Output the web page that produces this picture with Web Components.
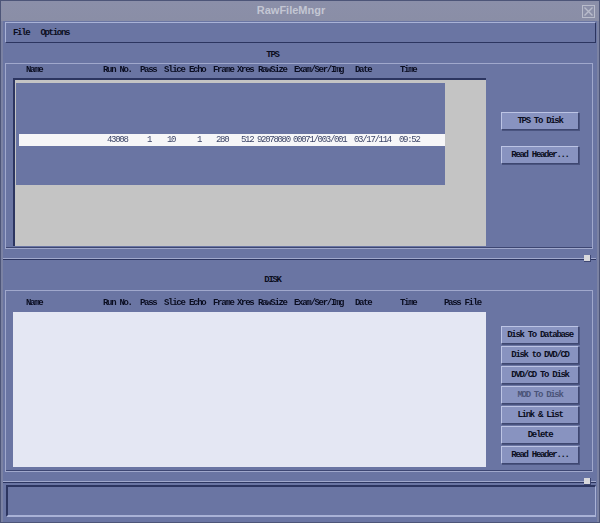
<!DOCTYPE html>
<html>
<head>
<meta charset="utf-8">
<title>RawFileMngr</title>
<style>
  html, body { margin: 0; padding: 0; background: #6a75a3; }
</style>
</head>
<body>
<raw-window>
  <raw-menubar><span>File</span><span>Options</span></raw-menubar>

  <raw-pane label="TPS" gap="34" label-height="20" label-top="7" header-height="14" list-height="168" bottom="2">
    <raw-row slot="header" columns="header" style="padding-top:1px">
      <span>Name</span><span>Run No.</span><span>Pass</span><span>Slice</span><span>Echo</span><span>Frame</span><span>Xres</span><span>RawSize</span><span>Exam/Ser/Img</span><span>Date</span><span>Time</span>
    </raw-row>
    <raw-tps-list slot="list">
      <raw-row columns="data" style="padding-top:1px">
        <span></span><span>43008</span><span>1</span><span>10</span><span>1</span><span>280</span><span>512</span><span>92078080</span><span>00071/003/001</span><span>03/17/114</span><span>09:52</span>
      </raw-row>
    </raw-tps-list>
    <raw-button slot="actions">TPS To Disk</raw-button>
    <raw-button slot="actions" style="margin-top:16px">Read Header...</raw-button>
  </raw-pane>

  <raw-sash></raw-sash>

  <raw-pane label="DISK" gap="14" label-height="30" label-top="15" header-height="21" list-height="155" bottom="4">
    <raw-row slot="header" columns="header" style="padding-top:7px">
      <span>Name</span><span>Run No.</span><span>Pass</span><span>Slice</span><span>Echo</span><span>Frame</span><span>Xres</span><span>RawSize</span><span>Exam/Ser/Img</span><span>Date</span><span>Time</span><span>Pass File</span>
    </raw-row>
    <raw-disk-list slot="list"></raw-disk-list>
    <raw-button slot="actions">Disk To Database</raw-button>
    <raw-button slot="actions" style="margin-top:2px">Disk to DVD/CD</raw-button>
    <raw-button slot="actions" style="margin-top:2px">DVD/CD To Disk</raw-button>
    <raw-button slot="actions" style="margin-top:2px" disabled>MOD To Disk</raw-button>
    <raw-button slot="actions" style="margin-top:2px">Link &amp; List</raw-button>
    <raw-button slot="actions" style="margin-top:2px">Delete</raw-button>
    <raw-button slot="actions" style="margin-top:2px">Read Header...</raw-button>
  </raw-pane>

  <raw-sash></raw-sash>
  <raw-status></raw-status>
</raw-window>

<script>
// condensed look of the X11 bitmap font: mono squeezed to about 4px per char
const UI_FONT = `"Liberation Mono", monospace`;
const UI_SPACING = "-1.3px";

class RawElement extends HTMLElement {
  constructor() {
    super();
    this.attachShadow({ mode: "open" });
  }
  connectedCallback() {
    this.shadowRoot.innerHTML = this.render();
  }
}

class RawWindow extends RawElement {
  render() {
    return /* html */ `
    <style>
      :host {
        display: block;
        box-sizing: border-box;
        width: 600px;
        height: 523px;
        overflow: hidden;
        background: #6a75a3;
        border: 1px solid #4d5578;
        font-family: ${UI_FONT};
      }
      .title {
        display: flex;
        box-sizing: border-box;
        align-items: center;
        justify-content: center;
        position: relative;
        height: 20px;
        padding: 0 18px 2px 0;
        background: linear-gradient(#8b8fa9, #8a8ea6);
        color: #c3c6d3;
        font: bold 11px "Liberation Sans", sans-serif;
      }
      .title svg { position: absolute; right: 4px; top: 4px; }
      .body {
        box-sizing: border-box;
        height: 501px;
        padding: 1px 3px 0 4px;
        box-shadow: inset 2px 0 0 #7b82a3, inset -2px 0 0 #7b82a3;
      }
    </style>
    <div class="title">RawFileMngr
      <svg width="13" height="13" viewBox="0 0 13 13" fill="none" stroke="#b9bccb">
        <rect x=".5" y=".5" width="12" height="12"/>
        <path d="M2.5 2.5l8 8M10.5 2.5l-8 8" stroke-width="1.4"/>
      </svg>
    </div>
    <div class="body"><slot></slot></div>`;
  }
}

class RawMenubar extends RawElement {
  render() {
    return /* html */ `
    <style>
      :host {
        display: flex;
        box-sizing: border-box;
        height: 21px;
        align-items: center;
        gap: 11px;
        padding: 1px 0 0 7px;
        background: #6a75a3;
        border: 1px solid;
        border-color: #a9b2d6 #2c3560 #2c3560 #a9b2d6;
        font: bold 9px ${UI_FONT};
        letter-spacing: ${UI_SPACING};
        color: #0a0d20;
      }
    </style>
    <slot></slot>`;
  }
}

class RawPane extends RawElement {
  render() {
    const gap = this.getAttribute("gap");
    const labelHeight = this.getAttribute("label-height");
    const labelTop = this.getAttribute("label-top");
    const headerHeight = this.getAttribute("header-height");
    const listHeight = this.getAttribute("list-height");
    return /* html */ `
    <style>
      :host { display: block; font: bold 9px ${UI_FONT}; letter-spacing: ${UI_SPACING}; color: #0a0d20; }
      .label {
        box-sizing: border-box;
        height: ${labelHeight}px;
        padding-right: 56px;
        padding-top: ${labelTop}px;
        text-align: center;
        line-height: 10px;
      }
      .frame {
        box-sizing: border-box;
        width: 588px;
        padding: 0 0 ${this.getAttribute("bottom")}px 7px;
        border: 1px solid #a0a8cc;
        box-shadow: inset 0 -1px 0 #3d4672;
        display: grid;
        grid-template-columns: 473px 1fr;
        grid-template-rows: ${headerHeight}px ${listHeight}px;
      }
      .header { grid-column: 1 / 3; margin-left: -7px; }
      .actions {
        display: flex;
        flex-direction: column;
        box-sizing: border-box;
        padding: ${gap}px 0 0 15px;
      }
    </style>
    <div class="label">${this.getAttribute("label")}</div>
    <div class="frame">
      <div class="header"><slot name="header"></slot></div>
      <slot name="list"></slot>
      <div class="actions"><slot name="actions"></slot></div>
    </div>`;
  }
}

const COLUMNS = {
  header: { start: 20, widths: "77px 37px 24px 25px 24px 24px 21px 36px 61px 45px 44px auto" },
  data: { start: 0, widths: "88px 40px 20px 30px 19px 25px 16px 36px 61px 45px auto" },
};

class RawRow extends RawElement {
  render() {
    const { start, widths } = COLUMNS[this.getAttribute("columns")];
    return /* html */ `
    <style>
      :host {
        display: grid;
        box-sizing: border-box;
        height: 100%;
        padding-left: ${start}px;
        grid-template-columns: ${widths};
        align-items: start;
        white-space: nowrap;
        will-change: transform;
      }
      ::slotted(span) { display: block; }
    </style>
    <slot></slot>`;
  }
}

class RawTpsList extends RawElement {
  render() {
    return /* html */ `
    <style>
      :host {
        display: block;
        box-sizing: border-box;
        height: 168px;
        background: #c4c4c4;
        border-top: 2px solid #2c3560;
        border-left: 2px solid #2c3560;
        padding: 3px 41px 61px 1px;
      }
      .viewport {
        box-sizing: border-box;
        height: 102px;
        background: #6a75a3;
        padding: 51px 0 39px 3px;
      }
      .selected {
        height: 12px;
        background: #f6f6f8;
        color: #3c4568;
        font: normal 9px ${UI_FONT};
        letter-spacing: ${UI_SPACING};
      }
    </style>
    <div class="viewport"><div class="selected"><slot></slot></div></div>`;
  }
}

class RawDiskList extends RawElement {
  render() {
    return `<style>:host { display: block; height: 155px; background: #e4e7f3; }</style>`;
  }
}

class RawButton extends RawElement {
  render() {
    const color = this.hasAttribute("disabled") ? "#4a5378" : "#0a0d20";
    return /* html */ `
    <style>
      :host {
        display: flex;
        box-sizing: border-box;
        width: 78px;
        height: 18px;
        align-items: center;
        justify-content: center;
        background: #8893c0;
        border: 1px solid;
        border-color: #bcc4e4 #3e4770 #3e4770 #bcc4e4;
        box-shadow: 1px 1px 0 #4a5480;
        color: ${color};
        font: bold 9px ${UI_FONT};
        letter-spacing: ${UI_SPACING};
        white-space: nowrap;
      }
    </style>
    <slot></slot>`;
  }
}

class RawSash extends RawElement {
  render() {
    return /* html */ `
    <style>
      :host { display: block; position: relative; height: 11px; }
      .line {
        position: absolute;
        left: -2px;
        right: 0;
        top: 9px;
        height: 1px;
        background: #a0a8cc;
        box-shadow: 0 1px 0 #2c3560;
      }
      .handle {
        position: absolute;
        right: 5px;
        top: 6px;
        width: 6px;
        height: 6px;
        background: #d8d8dc;
        border-right: 1px solid #3d4672;
        border-bottom: 1px solid #3d4672;
      }
    </style>
    <div class="line"></div><div class="handle"></div>`;
  }
}

class RawStatus extends RawElement {
  render() {
    return /* html */ `
    <style>
      :host {
        display: block;
        box-sizing: border-box;
        height: 32px;
        margin: 2px 0 0 1px;
        background: #6a75a3;
        border: 1px solid;
        border-width: 2px 1px 2px 2px;
        border-color: #2c3560 #a9b2d6 #a9b2d6 #2c3560;
      }
    </style>`;
  }
}

customElements.define("raw-window", RawWindow);
customElements.define("raw-menubar", RawMenubar);
customElements.define("raw-pane", RawPane);
customElements.define("raw-row", RawRow);
customElements.define("raw-tps-list", RawTpsList);
customElements.define("raw-disk-list", RawDiskList);
customElements.define("raw-button", RawButton);
customElements.define("raw-sash", RawSash);
customElements.define("raw-status", RawStatus);
</script>
</body>
</html>
